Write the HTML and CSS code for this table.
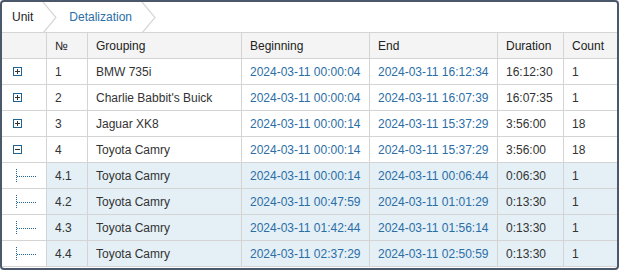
FILE: index.html
```html
<!DOCTYPE html>
<html>
<head>
<meta charset="utf-8">
<link rel="stylesheet" href="styles.css">
</head>
<body>
<div class="frame">
  <div class="crumbs">
    <span class="crumb first">Unit</span>
    <svg class="chev" width="16" height="31" viewBox="0 0 16 31"><polyline points="1,0 14,15.5 1,31" fill="none" stroke="#d6d6d6" stroke-width="1.2"/></svg>
    <span class="crumb active">Detalization</span>
    <svg class="chev" width="16" height="31" viewBox="0 0 16 31"><polyline points="1,0 14,15.5 1,31" fill="none" stroke="#d6d6d6" stroke-width="1.2"/></svg>
  </div>
  <table class="grid">
    <colgroup>
      <col class="c1"><col class="c2"><col class="c3"><col class="c4"><col class="c5"><col class="c6"><col class="c7">
    </colgroup>
    <thead>
      <tr><th></th><th>№</th><th>Grouping</th><th>Beginning</th><th>End</th><th>Duration</th><th>Count</th></tr>
    </thead>
    <tbody>
      <tr><td class="tog"><span class="box plus"></span></td><td>1</td><td>BMW 735i</td><td class="lnk">2024-03-11 00:00:04</td><td class="lnk">2024-03-11 16:12:34</td><td>16:12:30</td><td>1</td></tr>
      <tr><td class="tog"><span class="box plus"></span></td><td>2</td><td>Charlie Babbit's Buick</td><td class="lnk">2024-03-11 00:00:04</td><td class="lnk">2024-03-11 16:07:39</td><td>16:07:35</td><td>1</td></tr>
      <tr><td class="tog"><span class="box plus"></span></td><td>3</td><td>Jaguar XK8</td><td class="lnk">2024-03-11 00:00:14</td><td class="lnk">2024-03-11 15:37:29</td><td>3:56:00</td><td>18</td></tr>
      <tr><td class="tog"><span class="box minus"></span></td><td>4</td><td>Toyota Camry</td><td class="lnk">2024-03-11 00:00:14</td><td class="lnk">2024-03-11 15:37:29</td><td>3:56:00</td><td>18</td></tr>
      <tr class="sub"><td class="tog"><svg class="tree" width="24" height="16" viewBox="0 0 24 16"><line x1="1.5" y1="1" x2="1.5" y2="15" stroke="#1f6394" stroke-width="1" stroke-dasharray="1 1"/><line x1="2" y1="8.5" x2="22" y2="8.5" stroke="#1f6394" stroke-width="1" stroke-dasharray="1 1"/></svg></td><td>4.1</td><td>Toyota Camry</td><td class="lnk">2024-03-11 00:00:14</td><td class="lnk">2024-03-11 00:06:44</td><td>0:06:30</td><td>1</td></tr>
      <tr class="sub"><td class="tog"><svg class="tree" width="24" height="16" viewBox="0 0 24 16"><line x1="1.5" y1="1" x2="1.5" y2="15" stroke="#1f6394" stroke-width="1" stroke-dasharray="1 1"/><line x1="2" y1="8.5" x2="22" y2="8.5" stroke="#1f6394" stroke-width="1" stroke-dasharray="1 1"/></svg></td><td>4.2</td><td>Toyota Camry</td><td class="lnk">2024-03-11 00:47:59</td><td class="lnk">2024-03-11 01:01:29</td><td>0:13:30</td><td>1</td></tr>
      <tr class="sub"><td class="tog"><svg class="tree" width="24" height="16" viewBox="0 0 24 16"><line x1="1.5" y1="1" x2="1.5" y2="15" stroke="#1f6394" stroke-width="1" stroke-dasharray="1 1"/><line x1="2" y1="8.5" x2="22" y2="8.5" stroke="#1f6394" stroke-width="1" stroke-dasharray="1 1"/></svg></td><td>4.3</td><td>Toyota Camry</td><td class="lnk">2024-03-11 01:42:44</td><td class="lnk">2024-03-11 01:56:14</td><td>0:13:30</td><td>1</td></tr>
      <tr class="sub"><td class="tog"><svg class="tree" width="24" height="16" viewBox="0 0 24 16"><line x1="1.5" y1="1" x2="1.5" y2="15" stroke="#1f6394" stroke-width="1" stroke-dasharray="1 1"/><line x1="2" y1="8.5" x2="22" y2="8.5" stroke="#1f6394" stroke-width="1" stroke-dasharray="1 1"/></svg></td><td>4.4</td><td>Toyota Camry</td><td class="lnk">2024-03-11 02:37:29</td><td class="lnk">2024-03-11 02:50:59</td><td>0:13:30</td><td>1</td></tr>
    </tbody>
  </table>
</div>
</body>
</html>
```
FILE: styles.css
```css
html, body {
  margin: 0;
  padding: 0;
  background: #ffffff;
}
body {
  font-family: "Liberation Sans", Arial, sans-serif;
  font-size: 12px;
  color: #333333;
}
.frame {
  box-sizing: border-box;
  width: 619px;
  height: 270px;
  border: 2px solid #4b586c;
  border-radius: 4px;
  background: #ffffff;
  overflow: hidden;
}
.crumbs {
  display: flex;
  align-items: center;
  height: 30px;
  border-bottom: 1px solid #d4d4d4;
}
.crumb {
  line-height: 30px;
}
.crumb.first {
  padding-left: 10px;
  padding-right: 9px;
  color: #222222;
}
.crumb.active {
  padding-left: 11px;
  padding-right: 9px;
  color: #2a6ea6;
}
.chev {
  display: block;
  flex: none;
}
.grid {
  border-collapse: separate;
  border-spacing: 0;
  table-layout: fixed;
  width: 615px;
}
.c1 { width: 45px; }
.c2 { width: 41px; }
.c3 { width: 154px; }
.c4 { width: 128px; }
.c5 { width: 128px; }
.c6 { width: 66px; }
.c7 { width: 53px; }
.grid th, .grid td {
  box-sizing: border-box;
  height: 26px;
  padding: 0 0 0 8px;
  border-right: 1px solid #d4d4d4;
  border-bottom: 1px solid #d4d4d4;
  text-align: left;
  font-weight: normal;
  white-space: nowrap;
  overflow: hidden;
  vertical-align: middle;
}
.grid th {
  background: #f4f4f4;
  color: #222222;
}
.grid th:last-child, .grid td:last-child {
  border-right: none;
}
.grid td.lnk {
  color: #2a6ea6;
}
.grid tr.sub td {
  background: #e4eff6;
}
.grid tr.sub td.tog {
  background: #ffffff;
}
.grid td.tog {
  padding-left: 11px;
}
.box {
  display: block;
  position: relative;
  width: 9px;
  height: 9px;
  box-sizing: border-box;
  border: 1px solid #1f6394;
}
.box::before {
  content: "";
  position: absolute;
  left: 1px;
  top: 3px;
  width: 5px;
  height: 1px;
  background: #333333;
}
.box.plus::after {
  content: "";
  position: absolute;
  left: 3px;
  top: 1px;
  width: 1px;
  height: 5px;
  background: #333333;
}
.tree {
  display: block;
  margin-left: 2px;
}
```
